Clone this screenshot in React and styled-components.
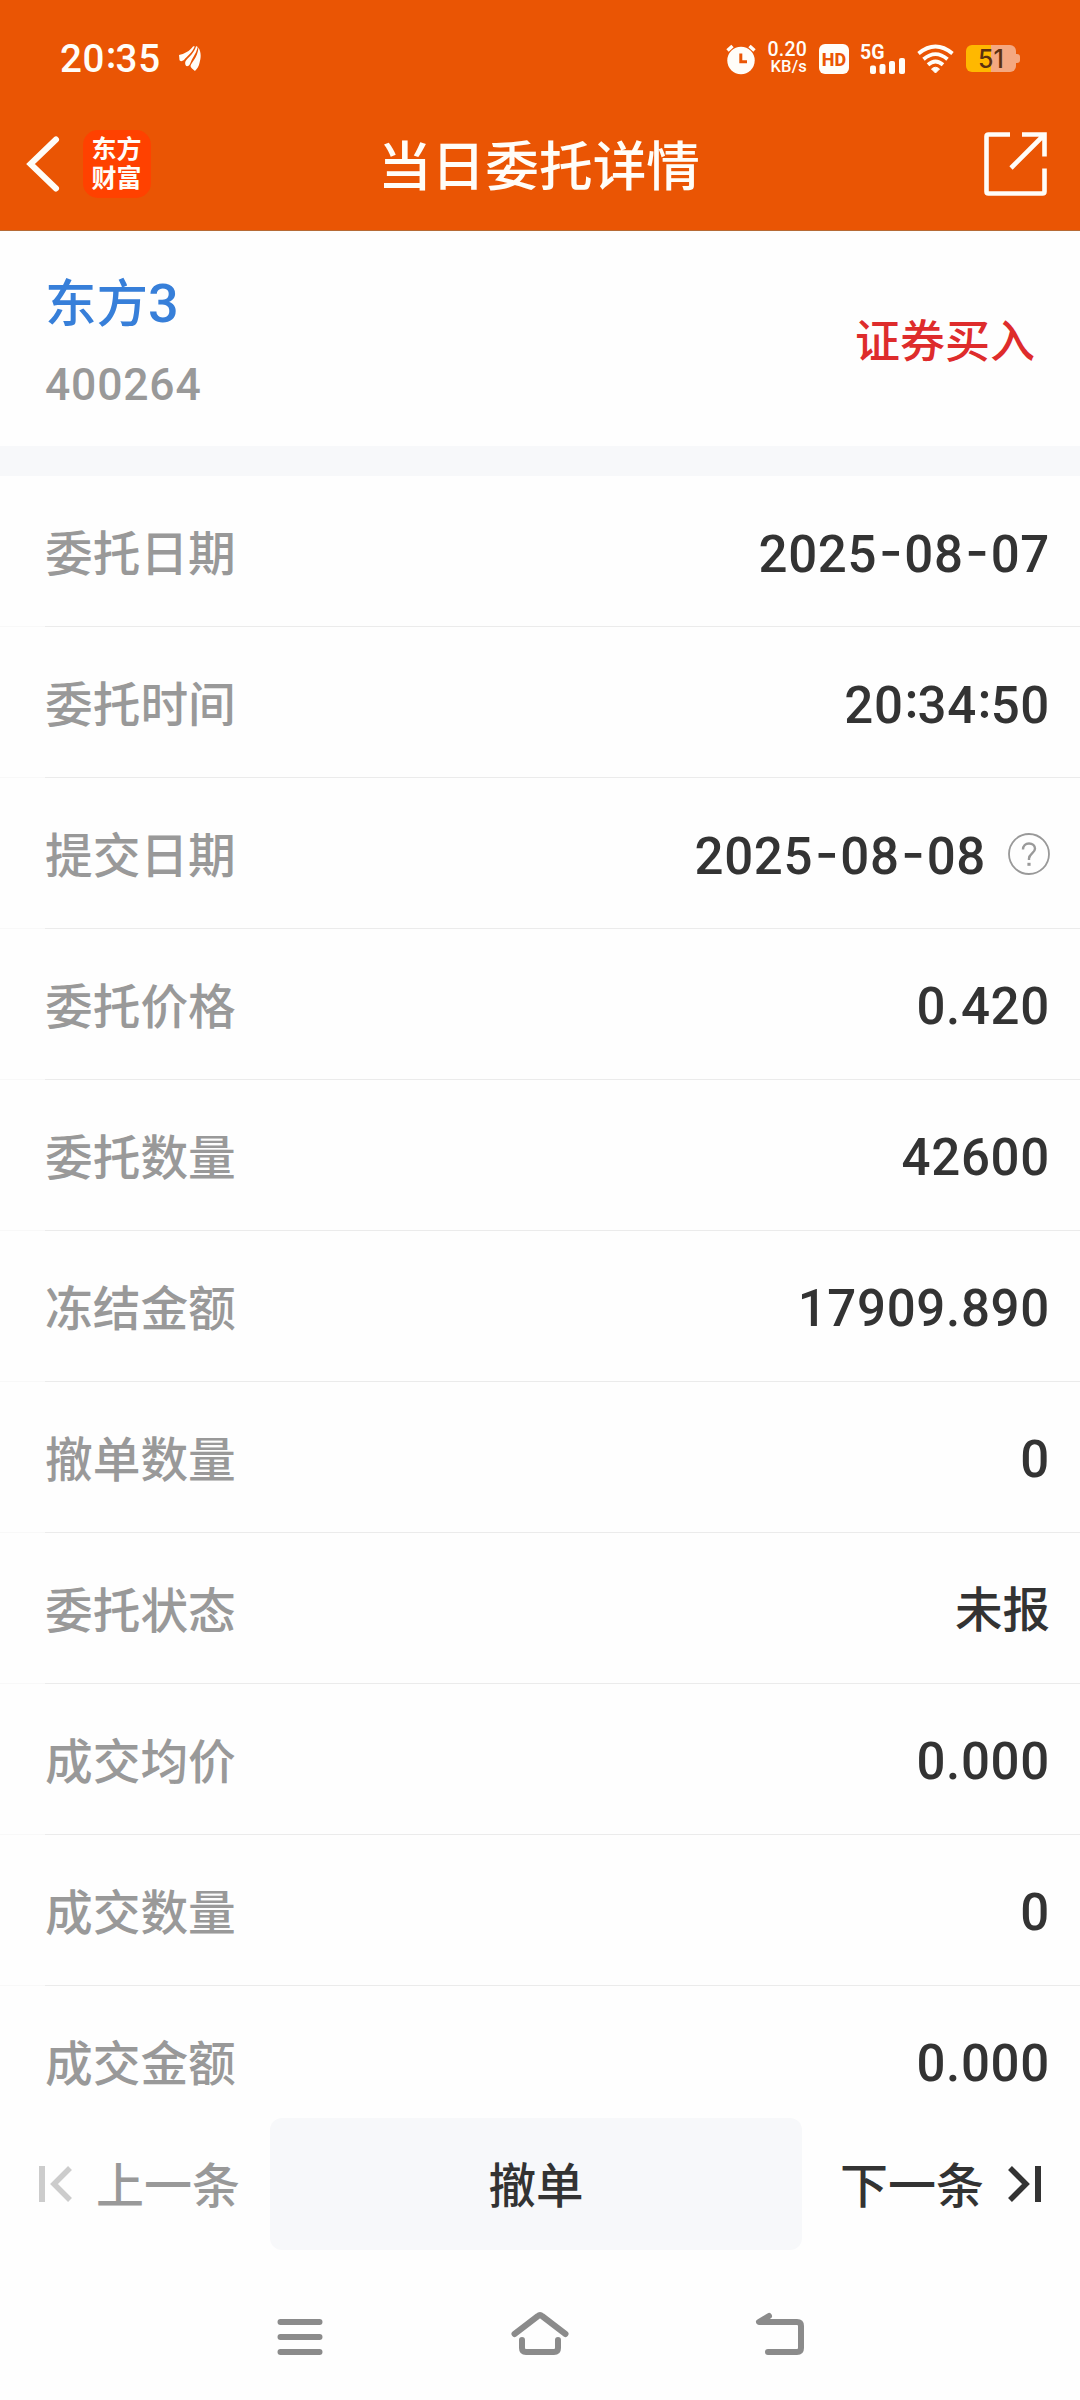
import React from "react"
// Styled Components
import styled, { createGlobalStyle } from "styled-components"

const GlobalStyle = createGlobalStyle`
  * {
    box-sizing: border-box;
  }
  body {
    margin: 0;
    background: #fefefe;
    font-family: Inter, "Noto Sans CJK SC", sans-serif;
    color: #333333;
  }
  svg {
    display: block;
    flex: none;
    overflow: visible;
  }
`

const Screen = styled.div`
  display: flex;
  flex-direction: column;
  width: 1080px;
  height: 2400px;
  overflow: hidden;
  background: #fefefe;
`

const TopArea = styled.header`
  height: 231px;
  flex: none;
  background: #ea5504;
  border-bottom: 1px solid #b66a35;
  color: #fffdf8;
`

const StatusBar = styled.div`
  display: flex;
  align-items: center;
  justify-content: space-between;
  height: 96px;
  padding: 21px 60px 0 60px;
`

const StatusGroup = styled.div`
  display: flex;
  align-items: center;
`

const Clock = styled.span`
  width: 119px;
  font-family: Roboto, sans-serif;
  font-size: 38.5px;
  font-weight: 500;
  line-height: 40px;
  letter-spacing: 0.7px;
`

const NetSpeed = styled.span`
  display: flex;
  flex-direction: column;
  align-items: flex-end;
  width: 38px;
  margin: 0 12px 0 13px;
  font-family: Roboto, sans-serif;
  font-size: 19.5px;
  font-weight: 500;
  line-height: 17px;
  letter-spacing: 0.2px;
  white-space: nowrap;

  small {
    font-size: 16.5px;
    line-height: 18px;
  }
`

const HdBadge = styled.span`
  width: 30px;
  height: 30px;
  margin-right: 11px;
  border-radius: 6px;
  background: #fffdf8;
  color: #ea5504;
  font-family: Roboto, sans-serif;
  font-size: 18px;
  font-weight: 800;
  line-height: 31px;
  text-align: center;
`

const Battery = styled.span`
  display: flex;
  align-items: center;
  margin-left: 12px;

  &::after {
    content: "";
    width: 4px;
    height: 9px;
    border-radius: 0 3px 3px 0;
    background: #f4a881;
  }
`

const BatteryBody = styled.span`
  width: 50px;
  height: 27px;
  border-radius: 6px;
  background: linear-gradient(
    to right,
    #ffb800 ${(props) => props.$level}%,
    #f4a881 ${(props) => props.$level}%
  );
  color: #5b2f10;
  font-family: Inter, sans-serif;
  font-size: 25px;
  font-weight: 500;
  line-height: 28px;
  text-align: center;
`

const TitleBar = styled.div`
  display: grid;
  grid-template-columns: 1fr auto 1fr;
  align-items: center;
  height: 135px;
  padding: 0 32px 0 26px;
`

const TitleLeft = styled.div`
  display: flex;
  align-items: center;
  gap: 23px;
`

const AppLogo = styled.div`
  width: 68px;
  height: 68px;
  padding: 3px 1px 0 0;
  border-radius: 15px;
  background: #ff4100;
  font-family: "Noto Sans CJK SC", sans-serif;
  font-size: 25px;
  font-weight: 700;
  line-height: 29.5px;
  text-align: center;
`

const Title = styled.h1`
  margin: 0;
  padding: 7px 0 0 4px;
  font-size: 53.7px;
  font-weight: 500;
  line-height: 64px;
`

const TitleRight = styled.div`
  display: flex;
  justify-content: flex-end;
`

const Security = styled.section`
  display: flex;
  align-items: center;
  justify-content: space-between;
  height: 215px;
  flex: none;
  padding: 0 45px;
`

const SecurityName = styled.div`
  padding-top: 12px;
  color: #377fd9;
  font-family: Roboto, "Noto Sans CJK SC", sans-serif;
  font-size: 51.5px;
  font-weight: 500;
  line-height: 80px;

  span {
    font-size: 54px;
  }
`

const SecurityCode = styled.div`
  color: #999999;
  font-family: Roboto, sans-serif;
  font-size: 44.5px;
  font-weight: 500;
  line-height: 80px;
  letter-spacing: 0.8px;
`

const TradeSide = styled.div`
  color: #de2c2c;
  font-size: 45px;
  font-weight: 500;
`

const Band = styled.div`
  height: 30px;
  flex: none;
  background: #f7f8fa;
`

const Rows = styled.dl`
  flex: 1;
  min-height: 0;
  margin: 0;
  overflow: hidden;
`

const Row = styled.div`
  display: flex;
  align-items: center;
  justify-content: space-between;
  height: 151px;
  padding: 4px 30px 0 45px;
  background: linear-gradient(to right, #f8f8f8 45px, #ebebeb 45px) bottom /
    100% 1px no-repeat;
`

const Label = styled.dt`
  color: #999999;
  font-size: 47.7px;
  font-weight: 500;
  line-height: 60px;
`

const Value = styled.dd`
  display: flex;
  align-items: center;
  gap: 22px;
  margin: 0;
  padding-top: 1px;
  font-family: Roboto, "Noto Sans CJK SC", sans-serif;
  font-size: ${(props) => (props.$numeric ? "51px" : "47.5px")};
  font-weight: 500;
  line-height: 60px;
  letter-spacing: ${(props) => (props.$numeric ? "0.7px" : "0")};
`

// Dash or colon, raised to the middle of the digits
const Separator = styled.span`
  display: inline-block;
  width: ${(props) => (props.$char === "-" ? "0.53em" : "0.27em")};
  font-family: Inter, sans-serif;
  font-feature-settings: "case";
  letter-spacing: 0;
  text-align: center;
`

const ActionBar = styled.div`
  display: flex;
  align-items: center;
  height: 132px;
  flex: none;
`

const StepButton = styled.button`
  display: flex;
  align-items: center;
  justify-content: ${(props) => (props.$next ? "flex-end" : "flex-start")};
  gap: 24px;
  width: ${(props) => (props.$next ? "278px" : "270px")};
  padding: ${(props) => (props.$next ? "0 39px 0 0" : "0 0 0 39px")};
  border: 0;
  background: none;
  color: ${(props) => (props.disabled ? "#999999" : "#333333")};
  font: 500 48px / 60px Inter, "Noto Sans CJK SC", sans-serif;
  white-space: nowrap;

  span {
    padding-top: 3px;
  }
`

const CancelButton = styled.button`
  width: 532px;
  height: 132px;
  padding: 4px 0 0;
  border: 0;
  border-radius: 12px;
  background: #f7f8fa;
  color: #333333;
  font: 500 47.5px / 60px Inter, "Noto Sans CJK SC", sans-serif;
`

const SystemNav = styled.nav`
  display: flex;
  justify-content: center;
  gap: 180px;
  height: 150px;
  flex: none;
  padding-top: 55px;
`

const AppNotification = () => (
  <svg width="22" height="26" viewBox="0 0 22 26" fill="#fffdf8">
    <path d="M0 9C5 8 11 5 14 .5C15 0 16 0 15.500 1C13 7 8 10 5 14C3 15.500 1 15.500 .5 14Z" />
    <path d="M17 .5C18 0 19 1 18.500 2C17 8 13 12 11 18C9.500 20.500 7.500 21 6.500 19C6 17 6 16 7 14.500C11 10 15 7 17 .5Z" />
    <path d="M19.500 1.500C22.500 7 22 12 20.500 17C20 20 18 23 16 25C14 23 11.500 22 11.500 20C12 17 18.500 12 19.500 1.500Z" />
  </svg>
)

const AlarmIcon = () => (
  <svg width="30" height="30" viewBox="0 0 30 30" fill="none">
    <circle cx="15" cy="16.500" r="13.700" fill="#fffdf8" />
    <path d="M1.500 6.500L6.500 2M28.500 6.500L23.500 2" stroke="#fffdf8" strokeWidth="3.500" />
    <path d="M14.800 9.500V17.800H21" stroke="#ea5504" strokeWidth="3" />
  </svg>
)

const SignalIcon = styled(({ className }) => (
  <svg className={className} width="46" height="30" viewBox="0 0 46 30" fill="#fffdf8">
    <text x="0" y="14.500" fontFamily="Roboto" fontSize="19.500" fontWeight="700">
      5G
    </text>
    <rect x="10" y="21.500" width="6" height="8.500" rx="2" />
    <rect x="19.500" y="20" width="6" height="10" rx="2" />
    <rect x="29" y="17" width="6" height="13" rx="2" />
    <rect x="39" y="14" width="6" height="16" rx="2" />
  </svg>
))`
  margin-right: 11px;
`

const WifiIcon = () => (
  <svg width="37" height="30" viewBox="0 0 37 30" fill="none" stroke="#fffdf8" strokeWidth="3.800">
    <path d="M1.500 9.500Q18.500 -4.500 35.500 9.500" />
    <path d="M6.500 15.300Q18.500 5 30.500 15.300" />
    <path d="M11 20.800Q18.500 14.200 26 20.800" />
    <path d="M14.500 25Q18.500 21.500 22.500 25L18.500 29Z" fill="#fffdf8" strokeWidth="1" />
  </svg>
)

const BackIcon = () => (
  <svg width="34" height="56" viewBox="0 0 34 56" fill="none">
    <path d="M30 3.500L4.500 28L30 52.500" stroke="#fffdf8" strokeWidth="6" strokeLinecap="round" />
  </svg>
)

const ShareIcon = () => (
  <svg width="64" height="64" viewBox="0 0 64 64" fill="none" stroke="#fffdf8" strokeWidth="4.600">
    <path d="M26 2.500H4.500Q2.500 2.500 2.500 4.500V59.500Q2.500 61.500 4.500 61.500H58.500Q60.500 61.500 60.500 59.500V36.500" />
    <path d="M38 2.500H60.500V24.500M60 3L27 36" />
  </svg>
)

const HelpIcon = styled(({ className }) => (
  <svg className={className} width="42" height="42" viewBox="0 0 42 42" fill="none" stroke="#999999">
    <circle cx="21" cy="21" r="20" strokeWidth="1.800" />
    <path
      d="M15 16.500C15 12.500 17.500 10.500 21 10.500C24.500 10.500 27 12.500 27 15.800C27 20 21 21 21 25.500V27"
      strokeWidth="2.400"
    />
    <path d="M19.400 31.300H22.600" strokeWidth="3" />
  </svg>
))`
  margin-top: -5px;
`

const FirstIcon = () => (
  <svg width="33" height="36" viewBox="0 0 33 36" fill="none" stroke="#cccccc">
    <path d="M3 0V36" strokeWidth="6" />
    <path d="M31 2L15 18L31 34" strokeWidth="5.500" />
  </svg>
)

const LastIcon = () => (
  <svg width="33" height="36" viewBox="0 0 33 36" fill="none" stroke="#333333">
    <path d="M30 0V36" strokeWidth="6" />
    <path d="M2 2L18 18L2 34" strokeWidth="5.500" />
  </svg>
)

const NavIcon = ({ d }) => (
  <svg
    width="60"
    height="60"
    viewBox="0 0 60 60"
    fill="none"
    stroke="#8b8b8b"
    strokeWidth="6"
    strokeLinecap="round"
    strokeLinejoin="round"
  >
    <path d={d} />
  </svg>
)

const Digits = ({ children }) => (
  <span>
    {children.split(/([-:])/).map((part, i) =>
      part === "-" || part === ":" ? (
        <Separator key={i} $char={part}>
          {part}
        </Separator>
      ) : (
        part
      )
    )}
  </span>
)

const details = [
  { label: "委托日期", value: "2025-08-07" },
  { label: "委托时间", value: "20:34:50" },
  { label: "提交日期", value: "2025-08-08", help: true },
  { label: "委托价格", value: "0.420" },
  { label: "委托数量", value: "42600" },
  { label: "冻结金额", value: "17909.890" },
  { label: "撤单数量", value: "0" },
  { label: "委托状态", value: "未报" },
  { label: "成交均价", value: "0.000" },
  { label: "成交数量", value: "0" },
  { label: "成交金额", value: "0.000" },
]

const App = () => (
  <Screen>
    <GlobalStyle />
    <TopArea>
      <StatusBar>
        <StatusGroup>
          <Clock>
            <Digits>20:35</Digits>
          </Clock>
          <AppNotification />
        </StatusGroup>
        <StatusGroup>
          <AlarmIcon />
          <NetSpeed>
            0.20
            <small>KB/s</small>
          </NetSpeed>
          <HdBadge>HD</HdBadge>
          <SignalIcon />
          <WifiIcon />
          <Battery>
            <BatteryBody $level={51}>51</BatteryBody>
          </Battery>
        </StatusGroup>
      </StatusBar>
      <TitleBar>
        <TitleLeft>
          <BackIcon />
          <AppLogo>
            东方
            <br />
            财富
          </AppLogo>
        </TitleLeft>
        <Title>当日委托详情</Title>
        <TitleRight>
          <ShareIcon />
        </TitleRight>
      </TitleBar>
    </TopArea>
    <Security>
      <div>
        <SecurityName>
          东方<span>3</span>
        </SecurityName>
        <SecurityCode>400264</SecurityCode>
      </div>
      <TradeSide>证券买入</TradeSide>
    </Security>
    <Band />
    <Rows>
      {details.map(({ label, value, help }) => (
        <Row key={label}>
          <Label>{label}</Label>
          <Value $numeric={/^\d/.test(value)}>
            <Digits>{value}</Digits>
            {help && <HelpIcon />}
          </Value>
        </Row>
      ))}
    </Rows>
    <ActionBar>
      <StepButton disabled>
        <FirstIcon />
        <span>上一条</span>
      </StepButton>
      <CancelButton>撤单</CancelButton>
      <StepButton $next>
        <span>下一条</span>
        <LastIcon />
      </StepButton>
    </ActionBar>
    <SystemNav>
      {/* recents, home, back */}
      <NavIcon d="M10.500 17H49.500M10.500 32H49.500M10.500 47H49.500" />
      <NavIcon d="M4.500 29L28 11Q30 9 32 11L55.500 29M12 35V43Q12 47 16 47H44Q48 47 48 43V35" />
      <NavIcon d="M19 11L9 17H47Q51 17 51 21V43Q51 47 47 47H18" />
    </SystemNav>
  </Screen>
)

export default App
